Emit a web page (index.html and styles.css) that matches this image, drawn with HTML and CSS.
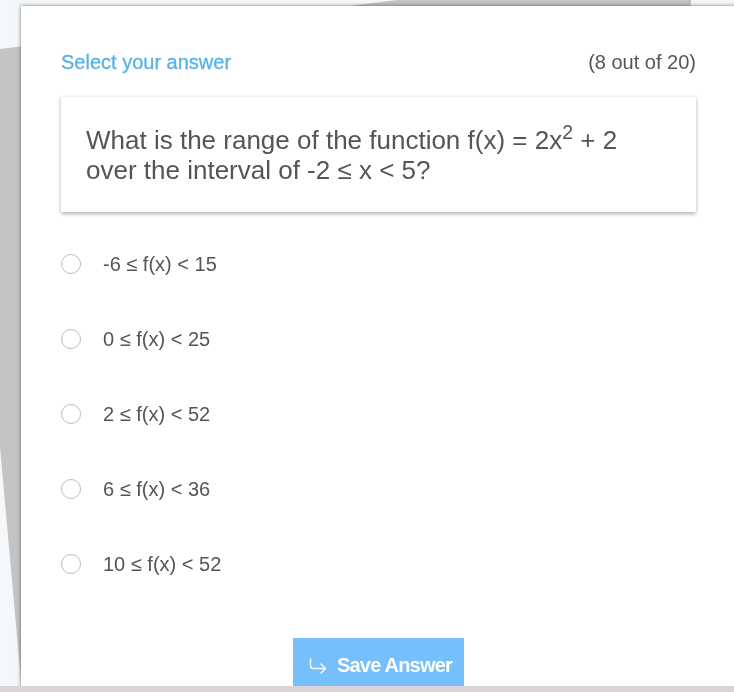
FILE: index.html
```html
<!DOCTYPE html>
<html lang="en">
<head>
  <meta charset="UTF-8" />
  <meta name="viewport" content="width=device-width, initial-scale=1.0"/>
  <title>Quiz</title>
  <link rel="stylesheet" href="styles.css">
</head>
<body>
  <div class="backdrop"></div>

  <div class="card">
    <div class="head">
      <span class="hint">Select your answer</span>
      <span class="count">(8 out of 20)</span>
    </div>

    <div class="question">
      What is the range of the function f(x) = 2x<sup>2</sup> + 2
      over the interval of -2 &le; x &lt; 5?
    </div>

    <div class="options">
      <label class="option"><input type="radio" name="odp" /> <span>-6 &le; f(x) &lt; 15</span></label>
      <label class="option"><input type="radio" name="odp" /> <span>0 &le; f(x) &lt; 25</span></label>
      <label class="option"><input type="radio" name="odp" /> <span>2 &le; f(x) &lt; 52</span></label>
      <label class="option"><input type="radio" name="odp" /> <span>6 &le; f(x) &lt; 36</span></label>
      <label class="option"><input type="radio" name="odp" /> <span>10 &le; f(x) &lt; 52</span></label>
    </div>

    <div class="actions">
      <button class="save">
        <svg width="18" height="16" viewBox="0 0 18 16" fill="none" stroke="#fff" stroke-width="1.4" stroke-linecap="round" stroke-linejoin="round">
          <path d="M1.5 1v6.5a3 3 0 0 0 3 3h12"/>
          <path d="M12 6l4.5 4.5L12 15"/>
        </svg>
        Save Answer
      </button>
    </div>
  </div>

  <div class="footer"></div>
</body>
</html>
```

FILE: styles.css
```css
html, body {
  margin: 0;
  height: 100%;
  overflow: hidden;
}

body {
  font-family: "Liberation Sans", Arial, sans-serif;
  background-color: #f5f8fb;
  padding: 6px 0 0 21px;
  box-sizing: border-box;
}

.backdrop {
  position: fixed;
  inset: 0;
  background-color: #c4c4c4;
  clip-path: polygon(0 49px, 397px 0, 691px 0, 691px 692px, 22px 692px, 0 447px);
}

.card {
  position: relative;
  width: 715px;
  min-height: 720px;
  background: #fff;
  box-shadow: 0 0 4px rgba(0,0,0,0.5);
  padding: 45px 40px 0 40px;
  box-sizing: border-box;
}

.head {
  display: flex;
  justify-content: space-between;
  align-items: baseline;
  font-size: 20px;
}

.hint {
  color: #57b2e6;
  -webkit-text-stroke: 0.3px #57b2e6;
}

.count {
  color: #555;
}

.question {
  margin-top: 22px;
  padding: 28px 25px 27px;
  font-size: 26px;
  line-height: 30px;
  color: #555;
  border-top: 1px solid #f0f0f0;
  box-shadow: 0 2px 4px rgba(0,0,0,0.3);
}

.question sup {
  font-size: 0.75em;
  line-height: 0;
}

.options {
  margin-top: 40px;
  display: flex;
  flex-direction: column;
  gap: 52px;
}

.option {
  display: flex;
  align-items: center;
  height: 23px;
  font-size: 20px;
  color: #555;
}

.option input {
  appearance: none;
  width: 20px;
  height: 20px;
  margin: 0 22px 0 0;
  border: 1px solid #bdbdbd;
  border-radius: 50%;
  box-sizing: border-box;
}

.option span {
  position: relative;
  top: 1px;
}

.actions {
  margin-top: 63px;
  display: flex;
  justify-content: center;
}

.save {
  display: flex;
  align-items: center;
  gap: 10px;
  height: 52px;
  padding: 3px 12px 0 16px;
  border: none;
  background: #74bffc;
  color: #fff;
  font-family: "Liberation Sans", Arial, sans-serif;
  font-size: 20px;
  font-weight: bold;
  letter-spacing: -0.8px;
}

.footer {
  position: fixed;
  left: 0;
  right: 0;
  bottom: 0;
  height: 6px;
  background: #dcd4d4;
}
```
